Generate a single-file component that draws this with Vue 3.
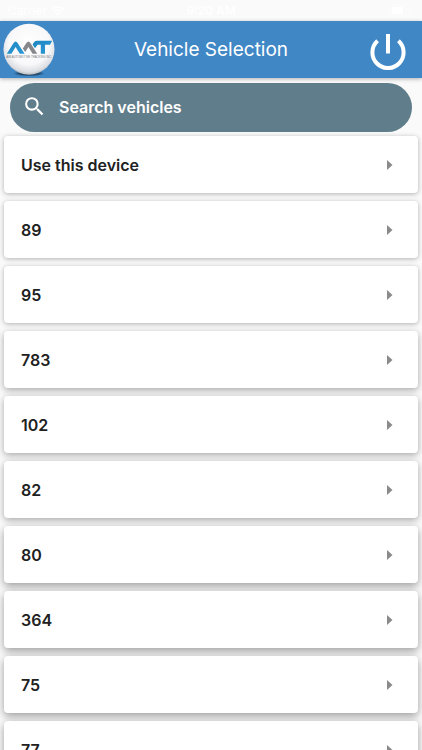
<script setup>
import { computed, ref } from 'vue'

const query = ref('')
const vehicles = ['Use this device', '89', '95', '783', '102', '82', '80', '364', '75', '77']
const shown = computed(() =>
  vehicles.filter((name) => name.toLowerCase().includes(query.value.trim().toLowerCase()))
)
</script>

<template>
  <div class="screen">
    <div class="status">
      <span class="carrier">
        Carrier
        <svg class="wifi" viewBox="0 0 14 10" aria-hidden="true">
          <path d="M1 3.6a8.6 8.6 0 0 1 12 0M3.2 5.9a5.4 5.4 0 0 1 7.6 0" fill="none" stroke="currentColor" stroke-width="1.7" />
          <path d="M4.9 7.5a3 3 0 0 1 4.2 0L7 9.8z" fill="currentColor" />
        </svg>
      </span>
      <span class="clock">9:20 AM</span>
      <svg class="battery" viewBox="0 0 24 11" aria-hidden="true">
        <rect x="0.5" y="0.5" width="20" height="10" rx="2.5" fill="none" stroke="currentColor" stroke-opacity="0.4" />
        <rect x="2" y="2" width="11" height="7" rx="1" fill="currentColor" />
      </svg>
    </div>

    <header class="bar">
      <svg class="logo" viewBox="0 0 540 540" role="img" aria-label="AMT">
        <defs>
          <radialGradient id="ball" cx="0.5" cy="0.4" r="0.62">
            <stop offset="0" stop-color="#ffffff" />
            <stop offset="0.65" stop-color="#f8f8fa" />
            <stop offset="0.88" stop-color="#dcdee2" />
            <stop offset="1" stop-color="#a9adb3" />
          </radialGradient>
          <radialGradient id="shade">
            <stop offset="0" stop-color="#10202e" />
            <stop offset="0.6" stop-color="#1b3850" stop-opacity="0.8" />
            <stop offset="1" stop-color="#1b3850" stop-opacity="0" />
          </radialGradient>
          <linearGradient id="blue" x1="0" x2="1" y1="0" y2="1">
            <stop offset="0" stop-color="#1f86c0" />
            <stop offset="1" stop-color="#2a9ad8" />
          </linearGradient>
        </defs>
        <ellipse cx="270" cy="505" rx="160" ry="28" fill="url(#shade)" />
        <circle cx="270" cy="262" r="255" fill="url(#ball)" />
        <path d="M48 308 116 200Q136 168 156 200L226 308H178L136 240 94 308Z" fill="url(#blue)" />
        <path d="M208 254 244 200Q264 168 284 200L352 308H306L264 240 232 290Z" fill="#85878b" />
        <path d="M306 216 318 196Q328 178 348 178H502L480 218H430V308H388V218H356L330 252Z" fill="url(#blue)" />
        <text x="270" y="346" text-anchor="middle" class="tagline">AIM AUTOMOTIVE TRACKING INC.</text>
      </svg>
      <h1 class="title">Vehicle Selection</h1>
      <button class="power" type="button" aria-label="Log out">
        <svg viewBox="0 0 36 36" aria-hidden="true">
          <path d="M7.6 6.8A15.6 15.6 0 1 0 28.4 6.8M18 0V19.5" fill="none" stroke="currentColor" stroke-width="4" />
        </svg>
      </button>
    </header>

    <main class="content">
      <label class="search">
        <svg class="lens" viewBox="0 0 24 24" aria-hidden="true">
          <path fill="currentColor" d="M15.5 14h-.79l-.28-.27A6.47 6.47 0 0 0 16 9.5 6.5 6.5 0 1 0 9.5 16c1.61 0 3.09-.59 4.23-1.57l.27.28v.79l5 4.99L20.49 19l-4.99-5zm-6 0C7.01 14 5 11.99 5 9.5S7.01 5 9.5 5 14 7.01 14 9.5 11.99 14 9.5 14z" />
        </svg>
        <input v-model="query" class="field" type="text" placeholder="Search vehicles" aria-label="Search vehicles" />
      </label>

      <ul class="list">
        <li v-for="name in shown" :key="name" class="item">
          <button class="card" type="button">
            <span>{{ name }}</span>
            <svg class="arrow" viewBox="0 0 6 10" aria-hidden="true">
              <path d="M0 0 5.5 5 0 10Z" fill="currentColor" />
            </svg>
          </button>
        </li>
      </ul>
    </main>
  </div>
</template>

<style>
body {
  background: #fafafa;
}
</style>

<style scoped>
.screen {
  display: flex;
  flex-direction: column;
  height: 100vh;
  overflow: hidden;
  background: #fafafa;
  color: #212121;
  font-family: Inter, Roboto, "Liberation Sans", sans-serif;
}

.status {
  display: grid;
  grid-template-columns: 1fr auto 1fr;
  align-items: center;
  flex: none;
  height: 21px;
  padding: 0 8px;
  box-sizing: border-box;
  color: #ffffff;
  font-size: 12px;
  line-height: 20px;
}

.carrier {
  display: flex;
  align-items: center;
  gap: 4px;
}

.wifi {
  width: 14px;
  height: 10px;
}

.clock {
  font-weight: 600;
}

.battery {
  justify-self: end;
  width: 24px;
  height: 11px;
}

.bar {
  display: grid;
  grid-template-columns: 1fr auto 1fr;
  align-items: center;
  flex: none;
  height: 57px;
  padding: 0 16px 0 2px;
  box-sizing: border-box;
  background: #4087c6;
  color: #ffffff;
  box-shadow: 0 1px 4px rgba(0, 0, 0, 0.3);
  z-index: 1;
}

.logo {
  width: 54px;
  height: 54px;
}

.tagline {
  fill: #77797d;
  font-family: "Liberation Sans", sans-serif;
  font-size: 28px;
}

.title {
  margin: 0;
  padding-left: 14px;
  font-size: 19px;
  font-weight: 400;
  line-height: 24px;
}

.power {
  justify-self: end;
  width: 36px;
  height: 36px;
  padding: 0;
  border: 0;
  background: none;
  color: #ffffff;
}

.power svg {
  display: block;
  margin-top: 2px;
}

.content {
  display: flex;
  flex-direction: column;
  flex: 1;
  min-height: 0;
  padding-top: 5px;
}

.search {
  display: flex;
  align-items: center;
  flex: none;
  gap: 12px;
  height: 49px;
  margin: 0 10px;
  padding: 0 12px 2px;
  box-sizing: border-box;
  border-radius: 25px;
  background: #607d8b;
  color: #ffffff;
}

.lens {
  flex: none;
  width: 25px;
  height: 25px;
}

.field {
  flex: 1;
  min-width: 0;
  padding: 0;
  border: 0;
  outline: 0;
  background: none;
  color: inherit;
  font: 600 16px/24px Inter, Roboto, "Liberation Sans", sans-serif;
}

.field::placeholder {
  color: #ffffff;
  opacity: 1;
}

.list {
  display: flex;
  flex-direction: column;
  flex: 1;
  gap: 8px;
  min-height: 0;
  margin: 0;
  padding: 4px;
  overflow-y: auto;
  scrollbar-width: none;
  list-style: none;
}

.item {
  flex: none;
}

.card {
  display: flex;
  align-items: center;
  justify-content: space-between;
  width: 100%;
  height: 57px;
  padding: 0 25px 0 17px;
  border: 0;
  border-radius: 4px;
  background: #ffffff;
  color: inherit;
  font: 600 16px/24px Inter, Roboto, "Liberation Sans", sans-serif;
  text-align: left;
  box-shadow: 0 1px 5px rgba(0, 0, 0, 0.3);
}

.item:nth-child(n + 4) .card {
  box-shadow: 0 2px 7px rgba(0, 0, 0, 0.34);
}

.item:nth-child(n + 7) .card {
  box-shadow: 0 3px 8px rgba(0, 0, 0, 0.38);
}

.arrow {
  width: 6px;
  height: 10px;
  color: #8a8a8a;
}
</style>
